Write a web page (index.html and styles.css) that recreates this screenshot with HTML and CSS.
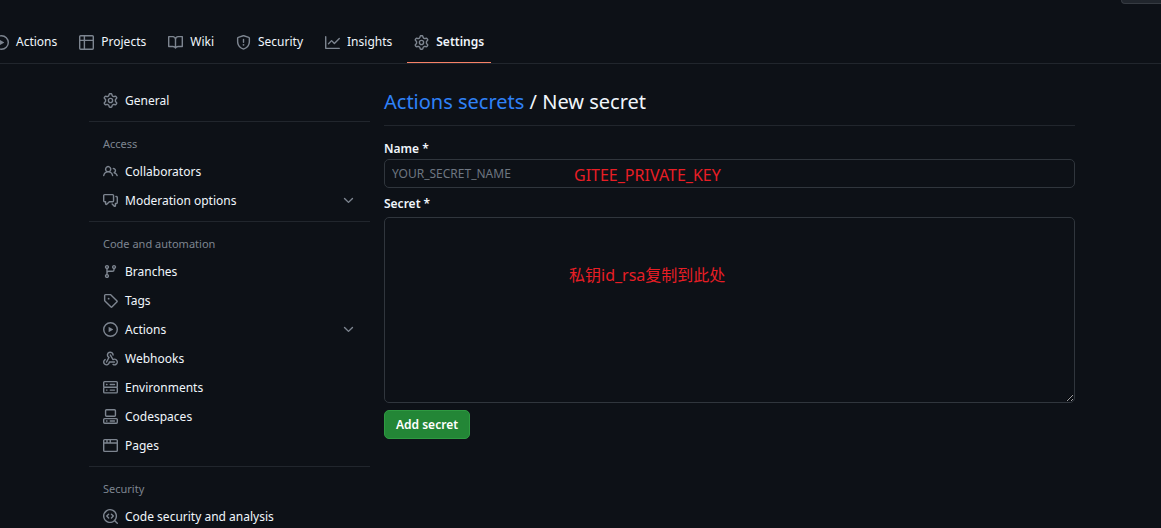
FILE: index.html
```html
<!DOCTYPE html>
<html lang="en">
<head>
<meta charset="utf-8">
<title>Actions secrets / New secret</title>
<link rel="stylesheet" href="styles.css">
</head>
<body>
<svg class="sprite" aria-hidden="true">
  <symbol id="gear" viewBox="0 0 16 16"><path d="M8 0a8.2 8.2 0 0 1 .701.031C9.444.095 9.99.645 10.16 1.29l.288 1.107c.018.066.079.158.212.224.231.114.454.243.668.386.123.082.233.09.299.071l1.103-.303c.644-.176 1.392.021 1.82.63.27.385.506.792.704 1.218.315.675.111 1.422-.364 1.891l-.814.806c-.049.048-.098.147-.088.294.016.257.016.515 0 .772-.01.147.038.246.088.294l.814.806c.475.469.679 1.216.364 1.891a7.977 7.977 0 0 1-.704 1.217c-.428.61-1.176.807-1.82.63l-1.102-.302c-.067-.019-.177-.011-.3.071a5.909 5.909 0 0 1-.668.386c-.133.066-.194.158-.211.224l-.29 1.106c-.168.646-.715 1.196-1.458 1.26a8.006 8.006 0 0 1-1.402 0c-.743-.064-1.289-.614-1.458-1.26l-.289-1.106c-.018-.066-.079-.158-.212-.224a5.738 5.738 0 0 1-.668-.386c-.123-.082-.233-.09-.299-.071l-1.103.303c-.644.176-1.392-.021-1.82-.63a8.12 8.12 0 0 1-.704-1.218c-.315-.675-.111-1.422.363-1.891l.815-.806c.05-.048.098-.147.088-.294a6.214 6.214 0 0 1 0-.772c.01-.147-.038-.246-.088-.294l-.815-.806C.635 6.045.431 5.298.746 4.623a7.92 7.92 0 0 1 .704-1.217c.428-.61 1.176-.807 1.82-.63l1.102.302c.067.019.177.011.3-.071.214-.143.437-.272.668-.386.133-.066.194-.158.211-.224l.29-1.106C6.009.645 6.556.095 7.299.03 7.53.01 7.764 0 8 0Zm-.571 1.525c-.036.003-.108.036-.137.146l-.289 1.105c-.147.561-.549.967-.998 1.189-.173.086-.34.183-.5.29-.417.278-.97.423-1.529.27l-1.103-.303c-.109-.03-.175.016-.195.045-.22.312-.412.644-.573.99-.014.031-.021.11.059.19l.815.806c.411.406.562.957.53 1.456a4.709 4.709 0 0 0 0 .582c.032.499-.119 1.05-.53 1.456l-.815.806c-.081.08-.073.159-.059.19.162.346.353.677.573.989.02.03.085.076.195.046l1.102-.303c.56-.153 1.113-.008 1.53.27.161.107.328.204.501.29.447.222.85.629.997 1.189l.289 1.105c.029.109.101.143.137.146a6.6 6.6 0 0 0 1.142 0c.036-.003.108-.036.137-.146l.289-1.105c.147-.561.549-.967.998-1.189.173-.086.34-.183.5-.29.417-.278.97-.423 1.529-.27l1.103.303c.109.029.175-.016.195-.045.22-.313.411-.644.573-.99.014-.031.021-.11-.059-.19l-.815-.806c-.411-.406-.562-.957-.53-1.456a4.709 4.709 0 0 0 0-.582c-.032-.499.119-1.05.53-1.456l.815-.806c.081-.08.073-.159.059-.19a6.464 6.464 0 0 0-.573-.989c-.02-.03-.085-.076-.195-.046l-1.102.303c-.56.153-1.113.008-1.53-.27a4.44 4.44 0 0 0-.501-.29c-.447-.222-.85-.629-.997-1.189l-.289-1.105c-.029-.11-.101-.143-.137-.146a6.6 6.6 0 0 0-1.142 0ZM11 8a3 3 0 1 1-6 0 3 3 0 0 1 6 0ZM9.5 8a1.5 1.5 0 1 0-3.001.001A1.5 1.5 0 0 0 9.5 8Z"/></symbol>
  <symbol id="play" viewBox="0 0 16 16"><path d="M8 0a8 8 0 1 1 0 16A8 8 0 0 1 8 0ZM1.5 8a6.5 6.5 0 1 0 13 0 6.5 6.5 0 0 0-13 0Zm4.879-2.773 4.264 2.559a.25.25 0 0 1 0 .428l-4.264 2.559A.25.25 0 0 1 6 10.559V5.442a.25.25 0 0 1 .379-.215Z"/></symbol>
  <symbol id="table" viewBox="0 0 16 16"><path d="M0 1.75C0 .784.784 0 1.75 0h12.5C15.216 0 16 .784 16 1.75v12.5A1.75 1.75 0 0 1 14.25 16H1.75A1.75 1.75 0 0 1 0 14.25ZM6.5 6.5v8h7.75a.25.25 0 0 0 .25-.25V6.5Zm8-1.5V1.75a.25.25 0 0 0-.25-.25H6.5V5Zm-13 1.5v7.75c0 .138.112.25.25.25H5v-8ZM5 5V1.5H1.75a.25.25 0 0 0-.25.25V5Z"/></symbol>
  <symbol id="book" viewBox="0 0 16 16"><path d="M0 1.75A.75.75 0 0 1 .75 1h4.253c1.227 0 2.317.59 3 1.501A3.743 3.743 0 0 1 11.006 1h4.245a.75.75 0 0 1 .75.75v10.5a.75.75 0 0 1-.75.75h-4.507a2.25 2.25 0 0 0-1.591.659l-.622.621a.75.75 0 0 1-1.06 0l-.622-.621A2.25 2.25 0 0 0 5.258 13H.75a.75.75 0 0 1-.75-.75Zm7.251 10.324.004-5.073-.002-2.253A2.25 2.25 0 0 0 5.003 2.5H1.5v9h3.757a3.75 3.75 0 0 1 1.994.574ZM8.755 4.75l-.004 7.322a3.752 3.752 0 0 1 1.992-.572H14.5v-9h-3.495a2.25 2.25 0 0 0-2.25 2.25Z"/></symbol>
  <symbol id="shield" viewBox="0 0 16 16"><path d="M7.467.133a1.748 1.748 0 0 1 1.066 0l5.25 1.68A1.75 1.75 0 0 1 15 3.48V7c0 1.566-.32 3.182-1.303 4.682-.983 1.498-2.585 2.813-5.032 3.855a1.697 1.697 0 0 1-1.33 0c-2.447-1.042-4.049-2.357-5.032-3.855C1.32 10.182 1 8.566 1 7V3.48a1.75 1.75 0 0 1 1.217-1.667Zm.61 1.429a.25.25 0 0 0-.153 0l-5.25 1.68a.25.25 0 0 0-.174.238V7c0 1.358.275 2.666 1.057 3.86.784 1.194 2.121 2.34 4.366 3.297a.196.196 0 0 0 .154 0c2.245-.956 3.582-2.104 4.366-3.298C13.225 9.666 13.5 8.36 13.5 7V3.48a.251.251 0 0 0-.174-.237l-5.25-1.68ZM8.75 4.75v3a.75.75 0 0 1-1.5 0v-3a.75.75 0 0 1 1.5 0ZM9 10.5a1 1 0 1 1-2 0 1 1 0 0 1 2 0Z"/></symbol>
  <symbol id="graph" viewBox="0 0 16 16"><path d="M1.5 1.75V13.5h13.75a.75.75 0 0 1 0 1.5H.75a.75.75 0 0 1-.75-.75V1.75a.75.75 0 0 1 1.5 0Zm14.28 2.53-5.25 5.25a.75.75 0 0 1-1.06 0L7 7.06 4.28 9.78a.751.751 0 0 1-1.06-1.06l3.25-3.25a.75.75 0 0 1 1.06 0L10 7.94l4.72-4.72a.751.751 0 0 1 1.06 1.06Z"/></symbol>
  <symbol id="people" viewBox="0 0 16 16"><path d="M2 5.5a3.5 3.5 0 1 1 5.898 2.549 5.508 5.508 0 0 1 3.034 4.084.75.75 0 1 1-1.482.235 4 4 0 0 0-7.9 0 .75.75 0 0 1-1.482-.236A5.507 5.507 0 0 1 3.102 8.05 3.493 3.493 0 0 1 2 5.5ZM11 4a3.001 3.001 0 0 1 2.22 5.018 5.01 5.01 0 0 1 2.56 3.012.749.749 0 0 1-.885.954.752.752 0 0 1-.549-.514 3.507 3.507 0 0 0-2.522-2.372.75.75 0 0 1-.574-.73v-.352a.75.75 0 0 1 .416-.672A1.5 1.5 0 0 0 11 5.5.75.75 0 0 1 11 4Zm-5.5-.5a2 2 0 1 0 0 4 2 2 0 0 0 0-4Z"/></symbol>
  <symbol id="discussion" viewBox="0 0 16 16"><path d="M1.75 1h8.5c.966 0 1.75.784 1.75 1.75v5.5A1.75 1.75 0 0 1 10.25 10H7.061l-2.574 2.573A1.458 1.458 0 0 1 2 11.543V10h-.25A1.75 1.75 0 0 1 0 8.25v-5.5C0 1.784.784 1 1.75 1ZM1.5 2.75v5.5c0 .138.112.25.25.25h1a.75.75 0 0 1 .75.75v2.19l2.72-2.72a.749.749 0 0 1 .53-.22h3.5a.25.25 0 0 0 .25-.25v-5.5a.25.25 0 0 0-.25-.25h-8.5a.25.25 0 0 0-.25.25Zm13 2a.25.25 0 0 0-.25-.25h-.5a.75.75 0 0 1 0-1.5h.5c.966 0 1.75.784 1.75 1.75v5.5A1.75 1.75 0 0 1 14.25 12H14v1.543a1.458 1.458 0 0 1-2.487 1.03L9.22 12.28a.749.749 0 0 1 1.06-1.06l2.22 2.22v-2.19a.75.75 0 0 1 .75-.75h1a.25.25 0 0 0 .25-.25Z"/></symbol>
  <symbol id="branch" viewBox="0 0 16 16"><path d="M9.5 3.25a2.25 2.25 0 1 1 3 2.122V6A2.5 2.5 0 0 1 10 8.5H6a1 1 0 0 0-1 1v1.128a2.251 2.251 0 1 1-1.5 0V5.372a2.25 2.25 0 1 1 1.5 0v1.836A2.493 2.493 0 0 1 6 7h4a1 1 0 0 0 1-1v-.628A2.25 2.25 0 0 1 9.5 3.25Zm-6 0a.75.75 0 1 0 1.5 0 .75.75 0 0 0-1.5 0Zm8.25-.75a.75.75 0 1 0 0 1.5.75.75 0 0 0 0-1.5ZM4.25 12a.75.75 0 1 0 0 1.5.75.75 0 0 0 0-1.5Z"/></symbol>
  <symbol id="tag" viewBox="0 0 16 16"><path d="M1 7.775V2.75C1 1.784 1.784 1 2.75 1h5.025c.464 0 .91.184 1.238.513l6.25 6.25a1.75 1.75 0 0 1 0 2.474l-5.026 5.026a1.75 1.75 0 0 1-2.474 0l-6.25-6.25A1.752 1.752 0 0 1 1 7.775Zm1.5 0c0 .066.026.13.073.177l6.25 6.25a.25.25 0 0 0 .354 0l5.025-5.025a.25.25 0 0 0 0-.354l-6.25-6.25a.25.25 0 0 0-.177-.073H2.75a.25.25 0 0 0-.25.25ZM6 5a1 1 0 1 1 0 2 1 1 0 0 1 0-2Z"/></symbol>
  <symbol id="webhook" viewBox="0 0 16 16"><path d="M5.5 4.25a2.25 2.25 0 0 1 4.5 0 .75.75 0 0 0 1.5 0 3.75 3.75 0 1 0-6.14 2.889l-2.272 4.258a.75.75 0 0 0 1.324.706L7 7.25a.75.75 0 0 0-.309-1.015A2.25 2.25 0 0 1 5.5 4.25Z"/><path d="M7.364 3.607a.75.75 0 0 1 1.03.257l2.608 4.349a3.75 3.75 0 1 1-.628 6.785.75.75 0 0 1 .752-1.299 2.25 2.25 0 1 0-.033-3.88.75.75 0 0 1-1.03-.256L7.107 4.636a.75.75 0 0 1 .257-1.03Z"/><path d="M2.9 8.776A.75.75 0 0 1 2.625 9.8 2.25 2.25 0 1 0 6 11.75a.75.75 0 0 1 .75-.751h5.5a.75.75 0 0 1 0 1.5H7.425a3.751 3.751 0 1 1-5.55-3.998.75.75 0 0 1 1.024.274Z"/></symbol>
  <symbol id="server" viewBox="0 0 16 16"><path d="M1.75 1h12.5c.966 0 1.75.784 1.75 1.75v4c0 .372-.116.717-.314 1 .198.283.314.628.314 1v4a1.75 1.75 0 0 1-1.75 1.75H1.75A1.75 1.75 0 0 1 0 12.75v-4c0-.358.109-.707.314-1a1.739 1.739 0 0 1-.314-1v-4C0 1.784.784 1 1.75 1ZM1.5 2.75v4c0 .138.112.25.25.25h12.5a.25.25 0 0 0 .25-.25v-4a.25.25 0 0 0-.25-.25H1.75a.25.25 0 0 0-.25.25Zm.25 5.75a.25.25 0 0 0-.25.25v4c0 .138.112.25.25.25h12.5a.25.25 0 0 0 .25-.25v-4a.25.25 0 0 0-.25-.25ZM7 4.75A.75.75 0 0 1 7.75 4h4.5a.75.75 0 0 1 0 1.5h-4.5A.75.75 0 0 1 7 4.75ZM7.75 10h4.5a.75.75 0 0 1 0 1.5h-4.5a.75.75 0 0 1 0-1.5ZM3 4.75A.75.75 0 0 1 3.75 4h.5a.75.75 0 0 1 0 1.5h-.5A.75.75 0 0 1 3 4.75ZM3.75 10h.5a.75.75 0 0 1 0 1.5h-.5a.75.75 0 0 1 0-1.5Z"/></symbol>
  <symbol id="codespaces" viewBox="0 0 16 16"><path d="M0 11.25c0-.966.784-1.75 1.75-1.75h12.5c.966 0 1.75.784 1.75 1.75v3A1.75 1.75 0 0 1 14.25 16H1.75A1.75 1.75 0 0 1 0 14.25Zm2-9.5C2 .784 2.784 0 3.75 0h8.5C13.216 0 14 .784 14 1.75v5a1.75 1.75 0 0 1-1.75 1.75h-8.5A1.75 1.75 0 0 1 2 6.75Zm1.75-.25a.25.25 0 0 0-.25.25v5c0 .138.112.25.25.25h8.5a.25.25 0 0 0 .25-.25v-5a.25.25 0 0 0-.25-.25Zm-2 9.5a.25.25 0 0 0-.25.25v3c0 .138.112.25.25.25h12.5a.25.25 0 0 0 .25-.25v-3a.25.25 0 0 0-.25-.25Z"/><path d="M7 12.75a.75.75 0 0 1 .75-.75h4.5a.75.75 0 0 1 0 1.5h-4.5a.75.75 0 0 1-.75-.75Zm-4 0a.75.75 0 0 1 .75-.75h.5a.75.75 0 0 1 0 1.5h-.5a.75.75 0 0 1-.75-.75Z"/></symbol>
  <symbol id="browser" viewBox="0 0 16 16"><path d="M0 2.75C0 1.784.784 1 1.75 1h12.5c.966 0 1.75.784 1.75 1.75v10.5A1.75 1.75 0 0 1 14.25 15H1.75A1.75 1.75 0 0 1 0 13.25ZM14.5 6h-13v7.25c0 .138.112.25.25.25h12.5a.25.25 0 0 0 .25-.25Zm-6-3.5v2h6V2.75a.25.25 0 0 0-.25-.25ZM5 2.5v2h2v-2Zm-3.25 0a.25.25 0 0 0-.25.25V4.5h2v-2Z"/></symbol>
  <symbol id="codescan" viewBox="0 0 16 16"><path d="M8.47 4.97a.75.75 0 0 0 0 1.06L9.94 7.5 8.47 8.97a.75.75 0 1 0 1.06 1.06l2-2a.75.75 0 0 0 0-1.06l-2-2a.75.75 0 0 0-1.06 0ZM6.53 6.03a.75.75 0 0 0-1.06-1.06l-2 2a.75.75 0 0 0 0 1.06l2 2a.75.75 0 1 0 1.06-1.06L5.06 7.5l1.47-1.47Z"/><path d="M12.246 13.307a7.501 7.501 0 1 1 1.06-1.06l2.474 2.473a.749.749 0 1 1-1.06 1.06ZM1.5 7.5a6.002 6.002 0 0 0 3.608 5.504 6.002 6.002 0 0 0 6.486-1.117.748.748 0 0 1 .292-.293A6 6 0 1 0 1.5 7.5Z"/></symbol>
  <symbol id="chevron" viewBox="0 0 16 16"><path d="M12.78 5.22a.749.749 0 0 1 0 1.06l-4.25 4.25a.749.749 0 0 1-1.06 0L3.22 6.28a.749.749 0 1 1 1.06-1.06L8 8.939l3.72-3.719a.749.749 0 0 1 1.06 0Z"/></symbol>
</svg>

<header class="topbar">
  <button class="topbar-button" type="button" aria-label="Repository action"></button>
  <nav class="tabs" aria-label="Repository">
    <a class="tab" href="#"><svg class="icon"><use href="#play"/></svg>Actions</a>
    <a class="tab" href="#"><svg class="icon"><use href="#table"/></svg>Projects</a>
    <a class="tab" href="#"><svg class="icon"><use href="#book"/></svg>Wiki</a>
    <a class="tab" href="#"><svg class="icon"><use href="#shield"/></svg>Security</a>
    <a class="tab" href="#"><svg class="icon"><use href="#graph"/></svg>Insights</a>
    <a class="tab tab-current" href="#" aria-current="page"><svg class="icon"><use href="#gear"/></svg>Settings</a>
  </nav>
</header>

<div class="layout">
  <nav class="sidebar" aria-label="Settings">
    <section class="group">
      <a class="item" href="#"><svg class="icon"><use href="#gear"/></svg>General</a>
    </section>
    <section class="group">
      <h2 class="group-title">Access</h2>
      <a class="item" href="#"><svg class="icon"><use href="#people"/></svg>Collaborators</a>
      <button class="item" type="button" aria-expanded="false"><svg class="icon"><use href="#discussion"/></svg>Moderation options<svg class="icon chevron"><use href="#chevron"/></svg></button>
    </section>
    <section class="group">
      <h2 class="group-title">Code and automation</h2>
      <a class="item" href="#"><svg class="icon"><use href="#branch"/></svg>Branches</a>
      <a class="item" href="#"><svg class="icon"><use href="#tag"/></svg>Tags</a>
      <button class="item" type="button" aria-expanded="false"><svg class="icon"><use href="#play"/></svg>Actions<svg class="icon chevron"><use href="#chevron"/></svg></button>
      <a class="item" href="#"><svg class="icon"><use href="#webhook"/></svg>Webhooks</a>
      <a class="item" href="#"><svg class="icon"><use href="#server"/></svg>Environments</a>
      <a class="item" href="#"><svg class="icon"><use href="#codespaces"/></svg>Codespaces</a>
      <a class="item" href="#"><svg class="icon"><use href="#browser"/></svg>Pages</a>
    </section>
    <section class="group">
      <h2 class="group-title">Security</h2>
      <a class="item" href="#"><svg class="icon"><use href="#codescan"/></svg>Code security and analysis</a>
    </section>
  </nav>

  <main class="content">
    <h1 class="title"><a class="title-link" href="#">Actions secrets</a> / New secret</h1>
    <form class="form">
      <label class="label" for="secret-name">Name *</label>
      <div class="field">
        <input class="input" id="secret-name" type="text" placeholder="YOUR_SECRET_NAME">
        <span class="note note-name">GITEE_PRIVATE_KEY</span>
      </div>
      <label class="label" for="secret-value">Secret *</label>
      <div class="field field-large">
        <textarea class="input textarea" id="secret-value"></textarea>
        <span class="note note-value" lang="zh">私钥id_rsa复制到此处</span>
      </div>
      <button class="submit" type="submit">Add secret</button>
    </form>
  </main>
</div>
</body>
</html>
```
FILE: styles.css
```css
* { box-sizing: border-box; }

html { overflow: hidden; background: #0d1117; }

body {
  margin: 0;
  background: #0d1117;
  color: #f0f6fc;
  font: 12px/20px "Noto Sans", "Noto Sans CJK SC", sans-serif;
}

a { color: inherit; text-decoration: none; }
button, input, textarea { font: inherit; color: inherit; }

.sprite { display: none; }

.icon {
  flex: none;
  width: 15px;
  height: 15px;
  fill: #7d8590;
}

.topbar {
  display: flex;
  flex-direction: column;
  border-bottom: 1px solid #21262d;
}

.topbar-button {
  align-self: flex-end;
  width: 40px;
  height: 4px;
  padding: 0;
  border: solid #363b42;
  border-width: 0 0 1px 1px;
  border-radius: 0 0 0 6px;
  background: #21262d;
}

.tabs {
  display: flex;
  gap: 8px;
  margin-top: 18px;
  margin-left: -13px;
}

.tab {
  display: flex;
  align-items: center;
  gap: 7px;
  height: 41px;
  padding: 0 7px;
  border-bottom: 1px solid transparent;
}

.tab-current {
  border-color: #f78166;
  font-weight: 600;
}

.layout {
  display: grid;
  grid-template-columns: 281px 1fr;
  gap: 14px;
  padding: 22px 86px 0 89px;
}

.group {
  padding-bottom: 6px;
}

.group + .group {
  border-top: 1px solid #21262d;
}

.group-title {
  margin: 0;
  padding: 12px 14px 3px;
  color: #7d8590;
  font-size: 11px;
  line-height: 20px;
  font-weight: 400;
}

.item {
  display: flex;
  align-items: center;
  gap: 7px;
  width: 100%;
  height: 29px;
  padding: 0 14px;
  border: 0;
  background: none;
  text-align: left;
}

.chevron { margin-left: auto; }

.content { padding-top: 1px; }

.title {
  margin: 0 0 13px;
  padding-bottom: 8px;
  border-bottom: 1px solid #21262d;
  font-size: 20px;
  line-height: 30px;
  font-weight: 400;
}

.title-link { color: #2f81f7; }

.form {
  display: flex;
  flex-direction: column;
  align-items: flex-start;
}

.label { font-weight: 600; }

.field {
  position: relative;
  width: 100%;
  margin-bottom: 6px;
}

.field-large { margin: 3px 0 7px; }

.input {
  display: block;
  width: 100%;
  height: 29px;
  padding: 0 7px;
  border: 1px solid #30363d;
  border-radius: 5px;
  background: #0d1117;
}

.input::placeholder { color: #6e7681; opacity: 1; }

.textarea {
  height: 186px;
  resize: vertical;
}

.note {
  position: absolute;
  color: #e81e25;
  font-size: 16px;
  line-height: 24px;
  pointer-events: none;
}

.note-name { top: 4px; left: 190px; }
.note-value { top: 46px; left: 185px; }

.submit {
  height: 29px;
  padding: 0 11px;
  border: 1px solid #2e9a41;
  border-radius: 5px;
  background: #238636;
  color: #fff;
  font-weight: 600;
}
```
